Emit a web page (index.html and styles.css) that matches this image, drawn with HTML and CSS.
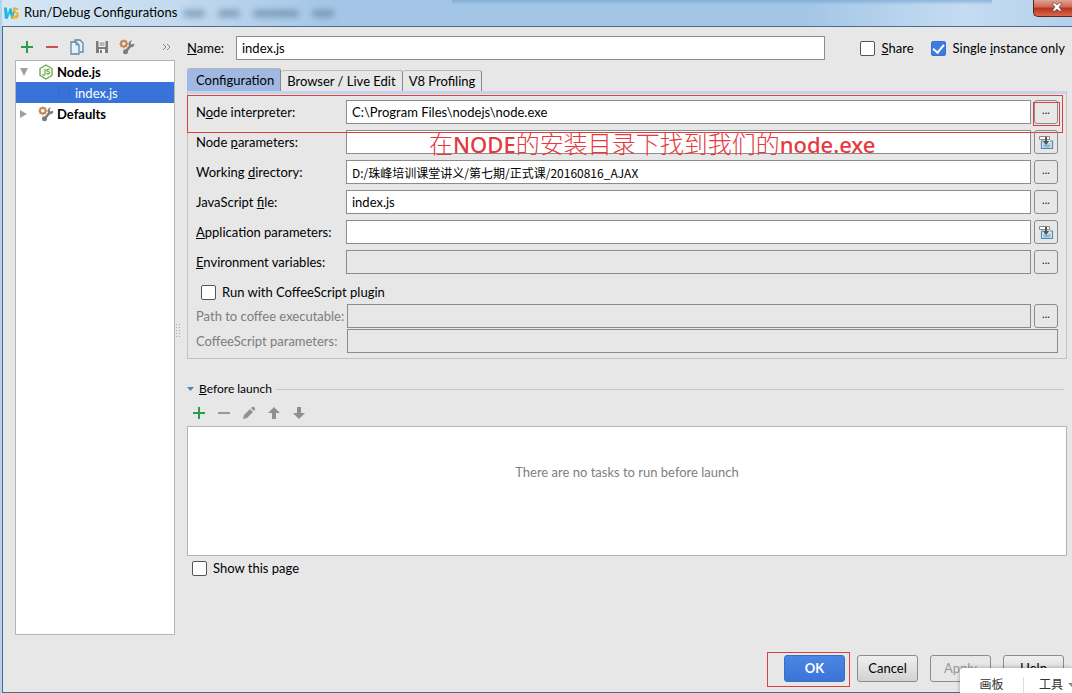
FILE: index.html
```html
<!DOCTYPE html>
<html lang="en">
<head>
<meta charset="utf-8">
<title>Run/Debug Configurations</title>
<link rel="stylesheet" href="styles.css">
</head>
<body>
<svg class="defs" aria-hidden="true">
  <symbol id="i-plus" viewBox="0 0 16 16"><path d="M8 2v12M2 8h12" stroke="#2a9d4a" stroke-width="2" fill="none"/></symbol>
  <symbol id="i-tools" viewBox="0 0 16 16"><circle cx="4.800" cy="4.800" r="2.800" fill="none" stroke="#c88652" stroke-width="2"/><path d="M4.800 .4v1.500M4.800 7.700v1.500M.4 4.800h1.500M7.700 4.800h1.500M1.700 1.700l1 1M6.900 6.900l1 1M7.900 1.700l-1 1M1.700 7.900l1-1" stroke="#c88652" stroke-width="1.300"/><path d="M6.500 13l5.500-7" stroke="#7c7c7c" stroke-width="2.600"/><path d="M13 1.500l-1.500 2.300 1 1.700 2.800-.8c.4 2.500-1.700 4.300-4.500 3.300L9.500 5.500C9.300 3.500 11 1.200 13 1.500z" fill="#7c7c7c"/><circle cx="6.500" cy="12.800" r="2.500" fill="#7c7c7c"/></symbol>
  <symbol id="i-insert" viewBox="0 0 16 16"><path d="M1.500 2.500h10v3h-10z" fill="#fff" stroke="#888"/><path d="M3.500 7v7.500h11V7h-3M3.500 7h2" fill="none" stroke="#4b8fb8" stroke-width="1.200"/><path d="M5 9h8v4.500H5z" fill="#b5d3e4"/><path d="M6 11.500h6M6 13h6" stroke="#6a9fbd" stroke-width=".7"/><path d="M8 3v5" stroke="#555" stroke-width="2"/><path d="M4.800 7h6.400L8 11z" fill="#555"/></symbol>
</svg>
<div class="window">
  <header class="titlebar">
    <svg class="logo" viewBox="0 0 16 16"><path d="M0 2h3l1 7 2-6h2l1 6 1-7h2l-2 12H8L6 8l-2 6H1z" fill="#22b4dc"/><path d="M15.500 3.500c-2-2-6-1.200-6 1.400 0 3.200 3.800 2.500 3.800 4.700 0 1.500-2.300 1.600-4.300.2L8 12.700c3 2.300 8 1.600 8-2.600C16 6.700 12 7 12 5.300c0-.9 1.400-1 2.600 0z" fill="#f0b323"/></svg>
    <h1>Run/Debug Configurations</h1>
    <div class="ghosts" aria-hidden="true"><i></i><i></i><i></i><i></i></div>
    <button class="close" aria-label="Close"><svg viewBox="0 0 12 10"><path d="M1 1h3l2 2 2-2h3L8 5l3 4H8L6 7 4 9H1l3-4z" fill="#fff" stroke="#555" stroke-width=".7"/></svg></button>
  </header>
  <main class="dialog">
    <div class="main">
      <aside class="side">
        <div class="toolbar">
          <button aria-label="Add"><svg><use href="#i-plus"/></svg></button>
          <button aria-label="Remove"><svg viewBox="0 0 16 16"><path d="M2 8h12" stroke="#c9504c" stroke-width="2"/></svg></button>
          <button aria-label="Copy"><svg viewBox="0 0 16 16"><path d="M6 3V1h5l3 3v9h-3" fill="#e8eef2" stroke="#5b87a6" stroke-width="1.300"/><path d="M2 3h5l3 3v9H2z" fill="#e8f0f5" stroke="#5b87a6" stroke-width="1.300"/><path d="M7 3v3h3" fill="none" stroke="#5b87a6"/></svg></button>
          <button aria-label="Save"><svg viewBox="0 0 16 16"><path d="M2 2h12v12H2z" fill="#7c7c7c"/><path d="M4.500 2h7v6h-7zM5 10h6v4H5z" fill="#f2f2f2"/><path d="M5.500 4h5M5.500 6h5" stroke="#7c7c7c"/><path d="M6 11h2v3H6z" fill="#7c7c7c"/></svg></button>
          <button aria-label="Edit defaults"><svg><use href="#i-tools"/></svg></button>
          <button class="more" aria-label="More"><svg viewBox="0 0 10 8"><path d="M1 1l3 3-3 3M5 1l3 3-3 3" fill="none" stroke="#888"/></svg></button>
        </div>
        <ul class="tree">
          <li><svg class="arrow" viewBox="0 0 10 10"><path d="M1 1h8L5 9z" fill="#a0a0a0"/></svg><svg class="ticon" viewBox="0 0 16 16"><path d="M8 1l6 3.500v7L8 15l-6-3.500v-7z" fill="#f4faef" stroke="#69a84f" stroke-width="1.300"/><path d="M7 5v5c0 1.500-2 1.500-2.500.3M11.500 6c-.8-1-3-.8-2.700.6.200 1.200 2.800.7 2.800 2.100 0 1.400-2.300 1.500-3 .4" fill="none" stroke="#69a84f" stroke-width="1.200"/></svg><b>Node.js</b></li>
          <li class="selected"><svg class="ticon" viewBox="0 0 16 16"><path d="M8 2l5 3v6l-5 3-5-3V5z" fill="none" stroke="#356fc8" stroke-width="1.500"/></svg>index.js</li>
          <li><svg class="arrow" viewBox="0 0 10 10"><path d="M1 1v8l7-4z" fill="#a0a0a0"/></svg><svg class="ticon"><use href="#i-tools"/></svg><b>Defaults</b></li>
        </ul>
      </aside>
      <div class="splitter"><span></span></div>
      <section class="content">
        <div class="namerow">
          <label for="name"><u>N</u>ame:</label>
          <input id="name" class="field" type="text" value="index.js">
          <label class="check share"><input type="checkbox"><span><u>S</u>hare</span></label>
          <label class="check"><input type="checkbox" checked><span>Single <u>i</u>nstance only</span></label>
        </div>
        <div class="tabs" role="tablist">
          <button class="tab active" role="tab">Configuration</button>
          <button class="tab" role="tab">Browser / Live Edit</button>
          <button class="tab" role="tab">V8 Profiling</button>
        </div>
        <div class="panel">
          <div class="mark"></div>
          <p class="note" lang="zh"><span>在</span>NODE<span>的安装目录下找到我们的</span>node.exe</p>
          <div class="row"><label for="f1">N<u>o</u>de interpreter:</label><input id="f1" class="field" type="text" value="C:\Program Files\nodejs\node.exe"><button class="browse marked">...</button></div>
          <div class="row"><label for="f2">Node <u>p</u>arameters:</label><input id="f2" class="field" type="text"><button class="browse" aria-label="Insert macro"><svg><use href="#i-insert"/></svg></button></div>
          <div class="row"><label for="f3">Working <u>d</u>irectory:</label><input id="f3" class="field path" type="text" value="D:/珠峰培训课堂讲义/第七期/正式课/20160816_AJAX"><button class="browse">...</button></div>
          <div class="row"><label for="f4">JavaScript <u>f</u>ile:</label><input id="f4" class="field" type="text" value="index.js"><button class="browse">...</button></div>
          <div class="row"><label for="f5"><u>A</u>pplication parameters:</label><input id="f5" class="field" type="text"><button class="browse" aria-label="Insert macro"><svg><use href="#i-insert"/></svg></button></div>
          <div class="row"><label for="f6"><u>E</u>nvironment variables:</label><input id="f6" class="field off" type="text" readonly><button class="browse">...</button></div>
          <label class="check coffee"><input type="checkbox"><span>Run with CoffeeScript plugin</span></label>
          <div class="row tight"><label for="f7">Path to coffee executable:</label><input id="f7" class="field off" type="text" disabled><button class="browse">...</button></div>
          <div class="row tight"><label for="f8">CoffeeScript parameters:</label><input id="f8" class="field off" type="text" disabled></div>
        </div>
        <h2 class="before"><svg viewBox="0 0 8 6"><path d="M0 1h7L3.500 5z" fill="#4d88b5"/></svg><span><u>B</u>efore launch</span></h2>
        <div class="toolbar tasks">
          <button aria-label="Add task"><svg><use href="#i-plus"/></svg></button>
          <button aria-label="Remove task"><svg viewBox="0 0 16 16"><path d="M2 8h12" stroke="#999" stroke-width="2"/></svg></button>
          <button aria-label="Edit task"><svg viewBox="0 0 16 16"><path d="M2 14l1-4 6-6 3 3-6 6zM10 3l1.500-1.200c1.500-.5 3 1 2.500 2.500L13 6z" fill="#909090"/></svg></button>
          <button aria-label="Move up"><svg viewBox="0 0 16 16"><path d="M8 2l6 6h-4v6H6V8H2z" fill="#909090"/></svg></button>
          <button aria-label="Move down"><svg viewBox="0 0 16 16"><path d="M8 14l6-6h-4V2H6v6H2z" fill="#909090"/></svg></button>
        </div>
        <div class="list">There are no tasks to run before launch</div>
        <label class="check show"><input type="checkbox"><span>Show this page</span></label>
      </section>
    </div>
    <footer class="actions">
      <button class="btn primary">OK</button>
      <button class="btn">Cancel</button>
      <button class="btn" disabled>Apply</button>
      <button class="btn">Help</button>
    </footer>
  </main>
  <div class="popup" lang="zh"><button>画板</button><button class="tool">工具<svg viewBox="0 0 8 6"><path d="M0 1h8L4 5z" fill="#888"/></svg></button></div>
</div>
</body>
</html>
```
FILE: styles.css
```css
* { box-sizing: border-box; }
body {
  margin: 0;
  font: 13px/18px Lato, "Noto Sans CJK SC", sans-serif;
  color: #000;
}
button, input { font: inherit; color: inherit; margin: 0; }
button { padding: 0; border: 0; background: none; }
svg { display: block; flex: none; }
.defs { position: absolute; width: 0; height: 0; }
.window {
  position: relative;
  display: flex;
  flex-direction: column;
  min-height: 100vh;
  padding-left: 2px;
  overflow: hidden;
  background: #b4d2ec;
}
.titlebar {
  display: flex;
  align-items: center;
  height: 26px;
  padding-left: 2px;
  background:
    linear-gradient(#6b9dcc99, #a3c6e600 5px) 450px 0 / 540px 5px no-repeat,
    linear-gradient(90deg, #d6e7f4 0, #c2d9ee 180px, #a3c6e6 330px, #a3c6e6 75%, #c5dcf2 90%, #b5d0ec);
}
.logo { width: 15px; height: 16px; }
h1 { margin: 0 0 2px 5px; font-size: 13px; font-weight: 400; line-height: 18px; white-space: nowrap; }
.ghosts { display: flex; gap: 13px; margin-left: 6px; flex: 1; }
.ghosts i { width: 22px; height: 7px; border-radius: 4px; background: #4f6f91; opacity: .55; filter: blur(3px); }
.ghosts i:nth-child(3) { width: 46px; }
.close {
  align-self: flex-start;
  display: flex;
  align-items: center;
  justify-content: center;
  width: 39px;
  height: 17px;
  padding: 0 0 3px 8px;
  border: 1px solid #5c2620;
  border-width: 0 0 1px 1px;
  border-radius: 0 0 0 5px;
  background: linear-gradient(#e2a394, #cf6350 45%, #b8301c 50%, #d8684c);
}
.close svg { width: 12px; height: 10px; }
.dialog {
  flex: 1;
  display: flex;
  flex-direction: column;
  padding: 0 5px 10px 12px;
  border: 1px solid #4c6a8c;
  border-right: 0;
  background: #e7e7e7;
}
.main { flex: 1; display: flex; }
.side { display: flex; flex-direction: column; width: 160px; }
.toolbar { display: flex; align-items: center; gap: 9px; height: 33px; padding: 7px 3px 0 4px; }
.toolbar svg { width: 16px; height: 16px; }
.toolbar .more { margin-left: auto; }
.toolbar .more svg { width: 10px; height: 8px; }
.tree {
  flex: 1;
  margin: 0;
  padding: 0;
  list-style: none;
  border: 1px solid #b5b5b5;
  background: #fff;
}
.tree li { display: flex; align-items: center; height: 21px; padding-left: 3px; }
.tree .selected { padding-left: 40px; background: #3873d9; color: #fff; }
.arrow { width: 10px; height: 10px; margin-right: 9px; }
.ticon { width: 16px; height: 16px; margin-right: 3px; }
.splitter { display: flex; align-items: center; width: 12px; }
.splitter span {
  width: 5px;
  height: 16px;
  background: radial-gradient(circle, #aaa 1px, transparent 1px) 0 0 / 3px 3px;
}
.content { flex: 1; min-width: 0; display: flex; flex-direction: column; }
.namerow { display: flex; align-items: center; padding-top: 9px; margin-bottom: 8px; }
.namerow > label:first-child { width: 49px; }
.field {
  flex: 1;
  min-width: 0;
  height: 24px;
  padding: 0 5px;
  border: 1px solid #8c8c8c;
  background: #fff;
}
.field.off { background: #e7e7e7; }
.path { font-family: "Noto Sans CJK SC", sans-serif; font-size: 12px; }
.check { display: flex; align-items: center; gap: 6px; white-space: nowrap; }
.check input {
  appearance: none;
  display: grid;
  place-items: center;
  width: 15px;
  height: 15px;
  border: 1px solid #555;
  border-radius: 2px;
  background: #fff;
}
.check input:checked { border-color: #3873d9; background: #3d7ddf; }
.check input:checked::after {
  content: "";
  width: 5px;
  height: 9px;
  margin-bottom: 2px;
  border: solid #fff;
  border-width: 0 2px 2px 0;
  transform: rotate(40deg);
}
.share { margin: 0 17px 0 35px; }
.namerow .check { gap: 7px; }
.namerow .check:last-child { margin-right: 2px; }
.tabs { display: flex; align-items: flex-end; height: 23px; }
.tab {
  height: 21px;
  padding: 0 6px;
  border: solid #b8b8b8;
  border-width: 1px 1px 0 0;
  border-right-color: #888;
  border-radius: 3px 3px 0 0;
  white-space: nowrap;
}
.tab.active { height: 23px; padding: 0 6px 0 9px; background: #9fb9e2; }
.panel {
  position: relative;
  padding: 6px 8px 5px;
  border: 1px solid #c2c2c2;
  border-top: 3px solid #c4d3ee;
}
.mark { position: absolute; inset: 1px 3px auto -1px; height: 38px; border: 1px solid #d9413f; }
.note {
  position: absolute;
  left: 241px;
  top: 31px;
  margin: 0;
  font-family: "Noto Sans", sans-serif;
  font-size: 22px;
  font-weight: 500;
  line-height: 36px;
  color: #e6383f;
  white-space: nowrap;
  pointer-events: none;
}
.note span { font-family: "Noto Sans CJK SC", sans-serif; font-size: 24px; font-weight: 300; }
.row { display: flex; align-items: center; margin-bottom: 6px; }
.row label { width: 150px; white-space: nowrap; }
.row.tight { margin-bottom: 1px; color: #7d7d7d; }
.row.tight label { width: 151px; }
.row.tight:last-child { margin-bottom: 0; }
.browse {
  position: relative;
  display: flex;
  align-items: center;
  justify-content: center;
  width: 24px;
  height: 24px;
  margin-left: 3px;
  padding-bottom: 4px;
  border: 1px solid #8c8c8c;
  border-radius: 3px;
  font-size: 11px;
  line-height: 10px;
  color: #222;
}
.browse svg { width: 16px; height: 16px; margin-top: 4px; }
.marked::after { content: ""; position: absolute; inset: 1px -3px -3px -2px; border: 1px solid #d9413f; }
.coffee { height: 24px; padding-left: 5px; }
.before {
  display: flex;
  align-items: center;
  gap: 4px;
  margin: 21px 3px 0 0;
  font-size: 12px;
  font-weight: 400;
  line-height: 18px;
}
.before svg { width: 8px; height: 6px; }
.before::after { content: ""; flex: 1; height: 1px; background: #c6c6c6; }
.tasks { height: 28px; padding-top: 2px; }
.list {
  height: 130px;
  padding-top: 36px;
  border: 1px solid #b5b5b5;
  background: #fff;
  color: #808080;
  text-align: center;
}
.show { height: 24px; padding-left: 5px; }
.actions { display: flex; justify-content: flex-end; gap: 12px; padding: 20px 3px 0 0; }
.btn {
  position: relative;
  width: 61px;
  height: 27px;
  padding-bottom: 2px;
  border: 1px solid #8c8c8c;
  border-radius: 3px;
  background: linear-gradient(#efefef, #d2d2d2);
}
.btn:disabled { background: #e7e7e7; color: #999; }
.btn.primary { border-color: #3c6fc4; background: linear-gradient(#4a86e4, #3b74d6); color: #fff; font-weight: 700; }
.primary::after { content: ""; position: absolute; inset: -4px -6px -6px -18px; border: 1px solid #d9413f; }
.popup {
  position: absolute;
  right: 0;
  bottom: 0;
  display: flex;
  align-items: center;
  width: 112px;
  height: 25px;
  padding-top: 8px;
  border-radius: 3px 0 0 0;
  background: #fff;
  box-shadow: 0 0 4px #0005;
  color: #333;
  font-size: 12px;
}
.popup button { width: 63px; height: 16px; line-height: 16px; white-space: nowrap; }
.popup .tool { display: flex; align-items: center; gap: 5px; width: 49px; padding-left: 15px; border-left: 1px solid #ddd; }
.popup svg { width: 8px; height: 6px; }
```
